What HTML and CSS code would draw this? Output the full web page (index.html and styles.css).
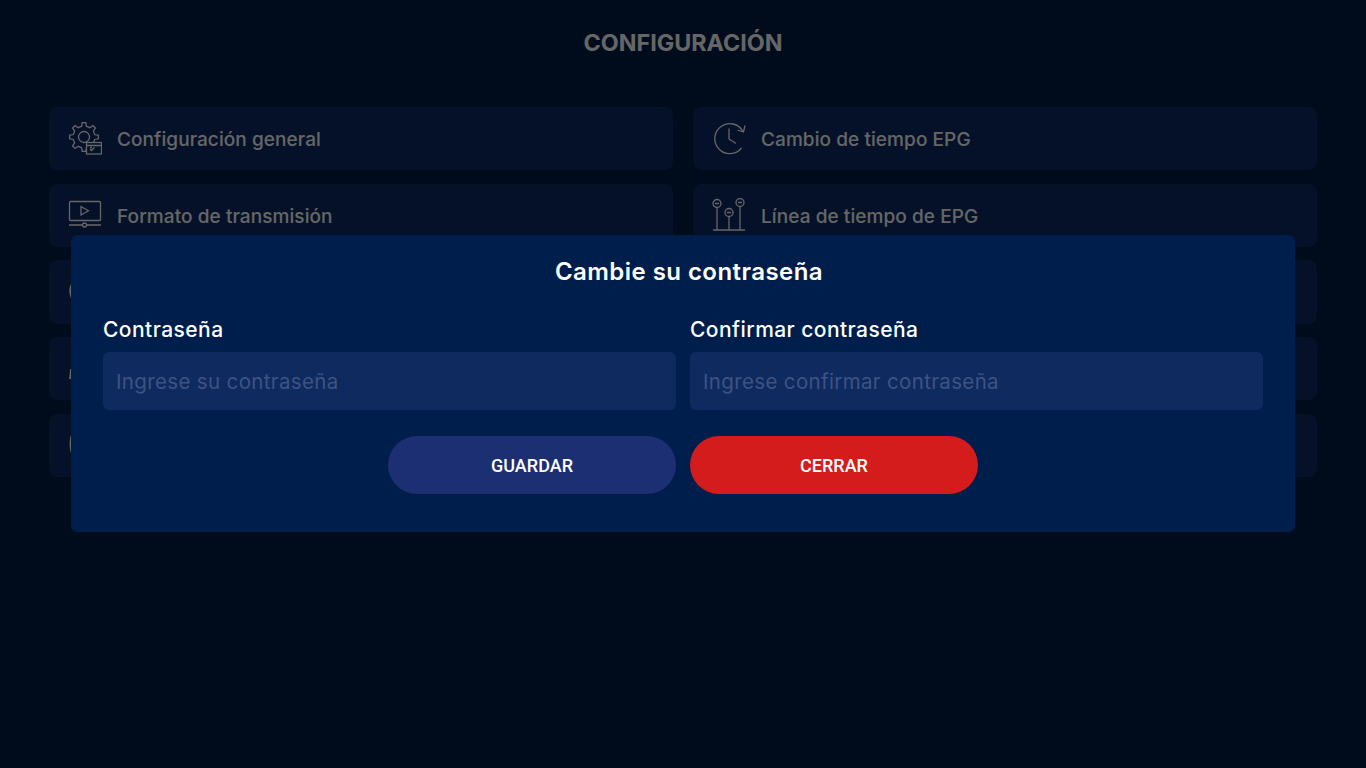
FILE: index.html
```html
<!DOCTYPE html>
<html lang="es">
<head>
<meta charset="utf-8">
<title>Configuración</title>
<link rel="stylesheet" href="styles.css">
</head>
<body>
<main class="page">
  <h1 class="page-title">CONFIGURACIÓN</h1>
  <div class="grid">
    <div class="card">
      <svg class="icon" viewBox="0 0 34 34"><path d="M26.72 12.53L30.39 13.23V16.77L26.72 17.47L25.33 20.83L27.43 23.92L24.92 26.43L21.83 24.33L18.47 25.72L17.77 29.39H14.23L13.53 25.72L10.17 24.33L7.08 26.43L4.57 23.92L6.67 20.83L5.28 17.47L1.61 16.77V13.23L5.28 12.53L6.67 9.17L4.57 6.08L7.08 3.57L10.17 5.67L13.53 4.28L14.23 .61H17.77L18.47 4.28L21.83 5.67L24.92 3.57L27.43 6.08L25.33 9.17Z"/><circle cx="16" cy="15" r="5.5"/><rect class="solid" x="18.5" y="20.5" width="15" height="11.5"/><path d="M18.5 23.5H33.5M22 27l1.5 1.5 3-3M22 25.5h2"/></svg>
      <span class="card-label">Configuración general</span>
    </div>
    <div class="card">
      <svg class="icon" viewBox="0 0 34 34"><path d="M31 9.500A15 15 0 1 0 29.500 26"/><path d="M33 3.500L31.500 10L25.500 8M17 6.500V17L24 21.500"/></svg>
      <span class="card-label">Cambio de tiempo EPG</span>
    </div>
    <div class="card">
      <svg class="icon" viewBox="0 0 34 34"><rect x="1.500" y="3.500" width="31" height="19" rx="1"/><path d="M13 8.500V17L20.500 12.800Z"/><path d="M1 27H14M19 27H33"/><circle cx="16.500" cy="27" r="2"/></svg>
      <span class="card-label">Formato de transmisión</span>
    </div>
    <div class="card">
      <svg class="icon" viewBox="0 0 34 34"><circle cx="5" cy="5.500" r="4"/><circle cx="17" cy="14.500" r="4"/><circle cx="28" cy="4.500" r="4"/><path d="M5 9.500V32M17 18.500V32M28 8.500V32M1 32H33M3 5.500h4M26 4.500h4M15 14.500h4"/></svg>
      <span class="card-label">Línea de tiempo de EPG</span>
    </div>
    <div class="card"><svg class="icon icon-peek" viewBox="0 0 34 34"><path d="M3.500 9.500Q1 16 3.500 22.500"/></svg></div>
    <div class="card"></div>
    <div class="card"><svg class="icon icon-peek" viewBox="0 0 34 34"><path d="M3 17L2 27"/></svg></div>
    <div class="card"></div>
    <div class="card"><svg class="icon icon-peek" viewBox="0 0 34 34"><path d="M3.500 8Q1.500 16 3.500 24"/></svg></div>
    <div class="card"></div>
  </div>
</main>
<div class="overlay">
  <section class="modal">
    <h2 class="modal-title">Cambie su contraseña</h2>
    <div class="fields">
      <label class="field">
        <span class="field-label">Contraseña</span>
        <input class="input" type="password" placeholder="Ingrese su contraseña">
      </label>
      <label class="field">
        <span class="field-label">Confirmar contraseña</span>
        <input class="input" type="password" placeholder="Ingrese confirmar contraseña">
      </label>
    </div>
    <div class="actions">
      <button class="btn btn-save" type="button">GUARDAR</button>
      <button class="btn btn-close" type="button">CERRAR</button>
    </div>
  </section>
</div>
</body>
</html>
```
FILE: styles.css
```css
* { box-sizing: border-box; }
html, body { margin: 0; height: 100%; }
body {
  background: #001c44;
  font-family: Inter, "Noto Sans", sans-serif;
  overflow: hidden;
}
.page { padding: 28px 49px 0; }
.page-title {
  margin: 0 0 48px;
  height: 31px;
  line-height: 29px;
  text-align: center;
  font-size: 23.300px;
  font-weight: 700;
  color: #fff;
}
.grid {
  display: grid;
  grid-template-columns: 1fr 1fr;
  column-gap: 20px;
  row-gap: 13.300px;
}
.card {
  height: 63.400px;
  display: flex;
  align-items: center;
  gap: 15px;
  padding-left: 19px;
  background: #0a2c68;
  border-radius: 8px;
}
.icon {
  width: 34px;
  height: 34px;
  flex: none;
  fill: none;
  stroke: #fff;
  stroke-width: 1.300;
}
.icon-peek { stroke-width: 1.800; }
.solid { fill: #0a2c68; }
.card-label {
  padding-top: 2px;
  font-size: 19px;
  font-weight: 500;
  letter-spacing: .08px;
  color: #fff;
}
.overlay {
  position: fixed;
  inset: 0;
  background: rgba(0, 0, 0, .6);
  padding: 235px 71px 0;
}
.modal {
  height: 297px;
  padding: 22px 32px 0;
  background: #001e4b;
  border-radius: 6px;
}
.modal-title {
  margin: 0 0 31px;
  padding-left: 12px;
  height: 30px;
  line-height: 30px;
  text-align: center;
  font-size: 24px;
  font-weight: 600;
  letter-spacing: .45px;
  color: #fff;
}
.fields {
  display: grid;
  grid-template-columns: 1fr 1fr;
  column-gap: 14px;
}
.field { display: flex; flex-direction: column; gap: 9px; }
.field-label {
  height: 25px;
  line-height: 23px;
  font-size: 21px;
  font-weight: 500;
  letter-spacing: .45px;
  color: #fff;
}
.input {
  height: 58px;
  padding: 0 13px;
  border: 0;
  border-radius: 6px;
  background: #0f2a5f;
  font: 400 20.500px Inter, "Noto Sans", sans-serif;
  letter-spacing: .35px;
  color: #fff;
}
.input::placeholder { color: #3d5384; opacity: 1; }
.actions {
  margin-top: 26px;
  padding-left: 285px;
  display: flex;
  gap: 14px;
}
.btn {
  width: 288px;
  height: 58px;
  border: 0;
  border-radius: 29px;
  font: 500 18px Roboto, sans-serif;
  color: #fff;
}
.btn-save { background: #1d2f73; }
.btn-close { background: #d41c1c; }
```
